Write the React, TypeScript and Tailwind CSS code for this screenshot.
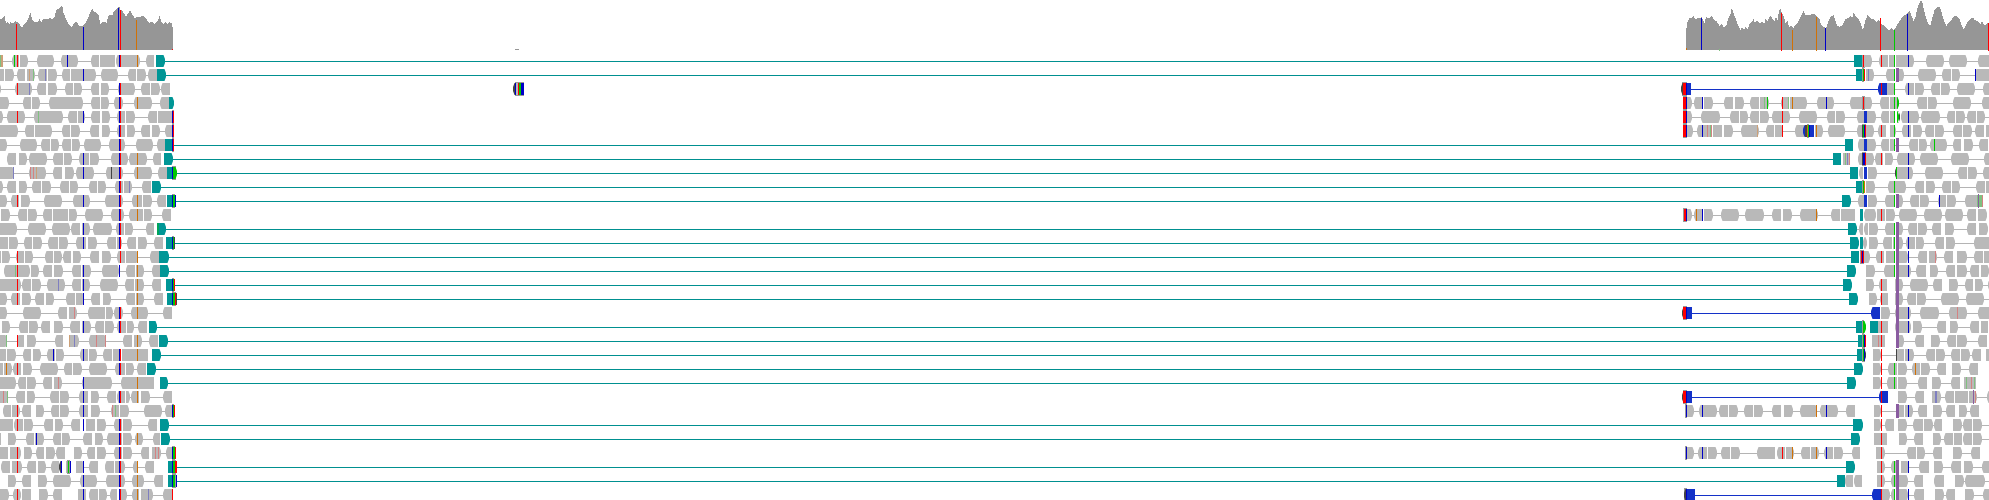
import React from "react";

/* Tracks are stored in locus units (three per pixel) relative to a panel origin.
   Reads:  12-40 plain, <12-40 reverse tip, 12-40> forward tip; t/b prefix = teal/blue.
   Bases:  r n g o p k (strong) and R N G O T (faint); h = soft-clip outline. */
const UNIT = 3;
const WIDTH = 1989;
const ROW = 14;
const LEFT = 0;
const MID = 5010;
const RIGHT = 5490;

const FILL: Record<string, string> = {
  "": "fill-[#b9b9b9]",
  t: "fill-[#009696]",
  b: "fill-[#1432c8]",
  r: "fill-[#ff0000]",
  n: "fill-[#0000c8]",
  g: "fill-[#00c800]",
  o: "fill-[#d17105]",
  p: "fill-[#8a5ca0]",
  k: "fill-[#444444]",
  h: "fill-[#999999]",
  R: "fill-[#d48282]",
  N: "fill-[#7f7fc0]",
  G: "fill-[#80c080]",
  O: "fill-[#cca078]",
  T: "fill-[#00a55a]",
};

const leftRows: string[] = [
  "0-10> <35-58 61-85> <110-163> <182-234> <272-297 300-345 <348-420> <437-462 t468-495> G0-3 O3-9 g43 r52 n202 n358 r361 o412",
  "0-12 15-42> <50-75 81-105> <115-140 143-170> <185-210 213-288> <302-355> <383-408 411-437> <443-471 t471-498> O88 G100 N136 n250",
  "0-3> <45-97> <112-138 144-170> <194-219 222-247> <272-297 303-328> <355-404> <423-450 453-480> <484-510 r52 N88 n358 r361",
  "0-26> <68-93 96-121> <148-200 200-250> <273-300 303-328> <343-370> <402-455> <481-507 t507-522> n358 r361 o412",
  "0-8> <20-74> <103-190> <205-230 233-256> <273-300 306-330> <350-375 378-406> <444-470 474-516 h515-522 r52 G115 n250 n358 r361 n517 r520",
  "0-53> <76-101 105-157> <185-210 213-241> <270-297 306-330> <352-375 381-406> <424-449 456-481> <495-516 h515-522 n358 r361 n517 r520",
  "0-20> <60-112> <124-150 153-178> <187-213 216-241> <252-304> <326-375> <408-460> <470-495 h515-522 t495-516 n358 r361 n517 r520",
  "<22-48 57-82> <88-140> <160-188 191-217> <236-267 270-296> <332-385> <387-440> <458-483 t492-519> n250 n358 r361 o412",
  "0-43> <87-138> <160-186 195-221> <228-282> <317-370> <402-457> <475-501 h516-528 t501-516 g520-531> N40 R91 R100 O109 n250 k334 n358 r361 o412 n517",
  "0-8> <22-48 57-82> <97-123 126-152> <180-207 210-235> <266-292 295-319> <345-369 372-395> <427-453 t456-483> n358 r361 N388",
  "0-20> <32-57 63-89> <133-185> <220-271> <316-370> <397-425 428-455> <472-497 h516-525 t501-516 r52 n250 n358 r361 o412 n517 g520-525 n525",
  "3-29> <55-81 84-110> <130-156 159-204 207-232> <255-308> <334-372> <387-428 431-457> <487-513 n358 r361 o412",
  "0-50> <85-137> <156-210> <212-240 246-270> <280-335> <347-372 375-400> <437-462 t472-497> T472-477 n250 n358 r361",
  "0-24 27-53> <71-96 99-125> <145-174 177-204> <228-258 265-292> <322-349 352-365> <382-408 414-440> <461-489 h516-522 t498-516 n250 n358 r361 n517 g520 k522",
  "0-3 6-31> <47-71 75-100> <134-159 162-187> <188-213 219-244> <270-297 306-332> <352-375 378-413> <450-477 t477-506> r52 r361 o412",
  "<12-63 64-89> 93-118> <128-156 162-188> <217-244 247-272> <306-358> <378-404 407-431> <455-480 t480-506> G46 r52 n250 n358 o412",
  "0-63> <66-93 96-122> <142-196> <217-243 246-271> <301-353> <376-402 405-431> <457-483 h516-522 t498-516 r52 N175 n250 o412 n517 g520 r522",
  "0-20> <33-60 66-92> <106-132 138-163> <199-225 228-253> <272-300 309-333> <379-405 408-432> <462-489 h516-528 t501-516 r52 n250 o412 n517 g520-526 r526 k529",
  "0-20> <70-124> <175-201 207-232> <264-316 317-340> <342-368> <392-443> <489-516 R223 n358 r361 o412",
  "6-31> <57-84 87-113> <123-150 162-188> <211-240 246-274> <286-312 315-341> <352-377 380-403> <415-440 t447-472> n250 n358 r361",
  "0-22> <50-71 81-107> <164-189 208-238> <266-318> <370-396 402-427> <447-474 t477-503> G19 r52 O208 N223 R289 R316 o412",
  "0-18 21-47> <68-93 99-124> <141-164 168-193> <239-264 267-292> <310-335 338-362 365-416 418-444 t456-483> n160 n250 n358 r361 o412",
  "0-9 12-35> <38-63 69-95> <121-175> <191-216 219-245> <266-320> <346-375 378-403> <412-438 t441-468> o19 r52 n358 r361",
  "0-47> <53-78 81-107> <130-156 162-187> <245-335> <364-390 391-462 t480-505> R175 n250 o412",
  "0-23> <48-75 81-105> <151-177 180-206> <238-264 273-298> <322-348 <352-375 378-390> <392-417 423-449> <490-516 R10 G22 n250 n358 r361 o412",
  "<8-33 36-61> <67-92 108-133> <152-177 180-208> <237-264 272-299> <332-358 360-388> <433-485> <496-516 h516-523 r52 R337 G346 n250 n517 g519 r522",
  "0-40 <42-69 72-98> <133-159 165-190> <214-240 258-285 291-317> <341-366 369-395> <445-471 t480-506> r52 n250 n358 r361",
  "0-3 24-49> <78-103 106-131> <160-183 186-211> <250-276 285-310> <320-366 369-395> <405-430> <458-480 t483-509> n109 n358 r361 o412",
  "0-24 30-62> 72-97> <107-132 138-164> <168-195 222-247> <262-285 291-317> <341-367 369-395> <423-448 456-483> <499-516 h516-526 r52 n358 r361 R467 R474 n517 g520-526 r526",
  "<4-30 36-66> <82-107 113-139> <152-176 k<177-184 n184 198-213 h202-210 g205 n211 228-252> <268-293 <315-341 344-375> <398-413> <435-462 h516-528 t504-516 r52 n250 n358 r361 o412 n517 g520-526 r526-531",
  "24-49> <67-93 114-140> <159-212> <239-291> <319-375> <396-432> <463-489 h516-528 t504-516 n250 n358 r361 o412 n517 g520-526 n528",
  "0-26> <40-62> 67-93 117-143> <159-186 234-259 <267-293 297-322> <330-352 <356-381> <397-416 423-459> <490-516 r52 n250 n358 r361 o412 N445 r517",
];

const midRows: Record<number, string> = {
  2: "h36-51 k<33-40 b48-63 r39-48 n49",
  3: "50-65> <72-98 101-128> <163-189 195-221> <240-267 270-297> <332-356 359-412> <440-491> h39-51 r39-48 n49 n97 G283 g292 r337 G355 o367 n469",
  4: "50-65> <94-149> <181-207 210-235> <240-267 270-297> <307-361> <387-440> <470-495 h39-51 r39-48 n49 r337",
  5: "50-68> <82-126> 130-156 162-188> <214-267> <287-312 315-340> <374-402 b<399-432 434-460> <473-526> h39-51 r39-48 n49 n97 R112 G121 R124 O262 r337 k406-411 h411-417 o411 g414 n417 o439",
  11: "50-67> <73-99 102-128> <153-207> <226-281> <307-333 339-366> <391-444> <483-509 513-555 h39-51 r42-48 n49 o79 n97 o439",
  18: "h38-51 k<36-42 b48-67 r40-48 n49",
  24: "h38-51 k<36-42 b48-67 r40-48 n49",
  25: "50-73> <88-140> <148-174 177-203> <223-249 252-278> <306-333 342-368> <391-440> <449-503> <528-555 h46-51 n49 n97 o439 n469",
  28: "50-73> <85-111 114-140> <153-180 183-209> <262-316 <320-345 348-372> <393-420 423-448> <463-489 492-518> <545-570 h46-51 n49 n97 r337 o367 o439 n469",
  31: "h43-51 k<41-48 b48-74 n49",
};

const rightRows: string[] = [
  "t72-96 h96-105 99-125> <148-174 177-196 198-251> <288-342> <358-411> <445-480 r100 r154 g193 n235",
  "t78-100 108-133> <168-196 206-221> <264-317> <336-363 366-391> <434-480 h97-103 g100 r103 N115 g193 p198-207 n436",
  "b<144-171 171-196> <226-251 255-281> <304-330 333-359> <381-434> <458-480 r154 g193 n235",
  "<60-125> <150-176 179-207> <262-290 294-320> <369-423> <456-480 h97-104 r100 g193 g201-208>",
  "0-15 18-44> <82-102 b102-111 112-139> <152-178 180-196 <213-266> <274-329> <350-375 378-404> <411-438 441-466> <478-480 g193 g201-208> k208-211> n235",
  "<80-132> <143-168 180-197> <217-244 250-275> <286-312 315-341> <370-396 399-425> <435-462 468-480 h96-108 k97 g100 n103 r106 r154 g193 n235",
  "t45-69 <85-102 b102-111 112-137> <152-177 180-196> <238-264 267-292> <299-352> <369-393 402-428> <447-474 g193 p198-207 g313",
  "t9-33 39-60 <83-100 106-133> <134-159 165-190> <202-254> <270-323> <363-416> <462-480 G46 N52 R58 h96-108 k97 n99-105 r106 r154 n235",
  "t60-84 <86-100 b102-111 113-140> <195-249> <285-339> <384-411 414-440> <460-480 k<194-199 g199 n235",
  "t78-100 108-134> <175-227> <255-282 288-314> <337-363 366-391> <437-465 467-480 h97-103 g100 o103 g193",
  "t36-63> <85-101 b102-111 113-142> <165-196 207-218> <240-267 270-296> <325-348 351-377> <405-458> g193 p198-207 n328 G442 p445 G448-456 R457",
  "t90-99 <101-138> 140-165 168-194> <207-260> <282-336> <346-400> <411-438 444-470> r154",
  "t54-80> <88-99 <101-114 117-143> <165-196 207-218> <234-261 264-290> <306-333 345-371> <412-438 447-473> g193",
  "t60-86> t90-99 <100-112> 117-143> <160-187 189-196 207-218> <228-254 258-283> <316-342 348-374> <433-480 g193 n235",
  "t63-87 90-119> <138-161 168-196 207-235> <264-290 297-322> <342-368 381-410> <433-459 462-480 h90-103 r93 n97 r100 r154 g193 n235 R316",
  "t51-77> 108-134> <162-196 198-243> <259-288 300-325> <348-374 382-411> <421-447 453-477> g193 n235",
  "t39-65> 108-133> <147-171 195-220> <240-294> <309-336 357-383> <404-429 435-460> <474-480 r154",
  "t57-83> 117-142> <149-174 195-220> <232-258 261-287> <333-386> <408-461> <478-480 r154",
  "b<123-150 153-179> <195-244> <271-326> <358-412> <444-480 n235 R382",
  "t78-99 h97-103 g100-108> t120-144 144-174 <195-243> 249-275> <321-347 360-384> <420-447 453-475 r154 n235",
  "t84-98 126-165 198-223> <255-282 303-329> <352-377 381-411> <445-471 h96-105 g99 n103 r106 R145 r154",
  "t81-98 129-154> <198-222 225-252> <289-315 318-344> <364-390 393-419> <427-453 468-480 h97-105 g99 n103 k105-109> r154 k199 n235",
  "t72-99> 129-154> <175-201 204-230> <245-270 273-299> <321-348 366-392> <417-444 r154 g193 o256",
  "t51-77> 129-154> <170-201 204-231> <264-291 306-332> <362-389 402-438 r154 g193 G409 R424 G433",
  "b<148-174 204-230> <255-282 306-332> <346-372 375-414 417-441> <471-480 r154 N315-321 p430 R436",
  "132-154> <198-222 225-250> <264-290 309-335> <348-375 387-412> <420-447 r154 p198-207 n235",
  "t69-98> 132-154> <165-192 204-232> <249-279 282-308> <311-336 369-396> <400-426 429-455> <477-480 r154",
  "t63-90> 132-171 207-232> <252-279 309-334> <343-369 372-396 <399-426 429-455> <477-480 r154",
  "138-164> <232-258 261-286> <309-336 369-395> <423-450 r154",
  "t48-75> 141-165> <182-207 213-238> <268-297 312-339> <363-393 402-430> <457-480 r154 g193 n235",
  "t21-45 <45-70 <71-96 141-165> <182-207 207-233> <252-279 <313-342 375-401> <405-464> <478-480 r154 g193",
  "b<126-154 154-181> <184-196 207-233> <253-282 315-341> <348-375 405-431> <459-480 r154 g193 n235",
];

/* Long-range mates: row, left x, right x (px). */
const tealMates: [number, number, number][] = [
  [0, 164, 1854], [1, 165, 1856], [6, 174, 1845], [7, 172, 1833], [8, 176, 1850],
  [9, 160, 1856], [10, 176, 1842], [12, 165, 1848], [13, 175, 1850], [14, 168, 1851],
  [15, 168, 1847], [16, 175, 1843], [17, 177, 1849], [19, 156, 1856], [20, 167, 1858],
  [21, 160, 1857], [22, 155, 1854], [23, 167, 1847], [26, 168, 1853], [27, 169, 1851],
  [29, 177, 1846], [30, 177, 1837],
];
const blueMates: [number, number, number][] = [
  [2, 1691, 1879], [18, 1692, 1872], [24, 1692, 1880], [31, 1694, 1873],
];

/* Insertion runs spanning several rows: top, height. */
const insertions: [number, number][] = [[167, 126], [405, 40]];

interface Item {
  kind: string;
  x0: number;
  x1: number;
  rev: boolean;
  fwd: boolean;
  read: boolean;
}

function parse(text: string, origin: number): Item[] {
  const out: Item[] = [];
  for (const token of text.split(" ")) {
    const m = /^([a-zA-Z]?)(<?)(\d+)(?:-(\d+))?(>?)$/.exec(token);
    if (!m) continue;
    const start = origin + Number(m[3]);
    const x0 = m[4] ? Math.round(start / UNIT) : Math.floor(start / UNIT);
    const x1 = m[4] ? Math.max(x0 + 1, Math.round((origin + Number(m[4])) / UNIT)) : x0 + 1;
    out.push({
      kind: m[1], x0, x1,
      rev: m[2] === "<", fwd: m[5] === ">",
      read: m[1] === "" || m[1] === "t" || m[1] === "b",
    });
  }
  return out;
}

function Shape({ item, y }: { item: Item; y: number }) {
  const { kind, x0, x1, rev, fwd } = item;
  if (kind === "h" || kind === "p") {
    return <rect x={x0} y={y - 1} width={x1 - x0} height={14} className={FILL[kind]} />;
  }
  if (!rev && !fwd) return <rect x={x0} y={y} width={x1 - x0} height={12} className={FILL[kind]} />;
  /* Blunt tip: the corners are cut, the middle third stays flat. */
  const a = rev ? x0 + 1.5 : x0;
  const b = fwd ? x1 - 1.5 : x1;
  const d = `M${a} ${y}H${b}L${x1} ${y + 4}V${y + 8}L${b} ${y + 12}H${a}L${x0} ${y + 8}V${y + 4}Z`;
  return <path d={d} className={FILL[kind]} />;
}

function Reads({ items, y }: { items: Item[]; y: number }) {
  const reads = items.filter((i) => i.read);
  return (
    <g>
      {reads.slice(1).map((next, i) => {
        const prev = reads[i];
        return prev.fwd && next.rev && next.x0 >= prev.x1 - 1 ? (
          <rect key={i} x={prev.x1 - 1} y={y + 6} width={next.x0 - prev.x1 + 2} height={1} className="fill-[#b4b4b4]" />
        ) : null;
      })}
      {items.map((item, i) => (
        <Shape key={i} item={item} y={y} />
      ))}
    </g>
  );
}

function Alignments() {
  return (
    <svg viewBox={`0 0 ${WIDTH} 445`} className="block w-full" role="img" aria-label="Read alignments">
      {tealMates.map(([row, a, b]) => (
        <rect key={row} x={a} y={row * ROW + 6} width={b - a} height={1} className="fill-[#009090]" />
      ))}
      {blueMates.map(([row, a, b]) => (
        <rect key={row} x={a} y={row * ROW + 6} width={b - a} height={1} className="fill-[#1432c8]" />
      ))}
      {leftRows.map((text, row) => (
        <Reads key={row} items={parse(text, LEFT)} y={row * ROW} />
      ))}
      {rightRows.map((text, row) => (
        <Reads key={row} items={[...parse(midRows[row] ?? "", MID), ...parse(text, RIGHT)]} y={row * ROW} />
      ))}
      {insertions.map(([y, h]) => (
        <rect key={y} x={1896} y={y} width={3} height={h} className="fill-[#8a5ca0]" />
      ))}
      <Reads items={parse("h75-102 k<70-76 75-84 n75 r84 g87-93 n93-102", 1470)} y={28} />
    </svg>
  );
}

const leftDepth =
  "0,57 7,55 13,48 16,62 19,68 22,66 27,72 31,66 37,70 46,64 52,66 58,72 66,84 70,74 78,68 84,58 90,37 94,50 97,60 103,66 112,65 118,58 124,66 128,56 136,56 145,57 151,53 155,60 163,50 168,30 176,25 183,18 188,22 190,40 197,55 202,65 208,76 215,82 222,70 230,64 236,76 243,80 250,74 256,68 262,58 268,42 276,26 280,34 290,38 296,46 300,72 305,68 312,66 320,68 323,50 330,44 337,46 340,36 346,30 352,24 358,20 361,30 366,30 372,42 378,50 384,40 390,30 396,42 404,56 412,50 420,50 430,48 436,54 442,62 448,68 455,64 462,72 468,66 474,60 478,48 484,66 490,73 496,66 502,72 508,66 514,70 518,84";
const midDepth =
  "48,90 52,66 58,54 65,54 70,49 76,56 85,55 94,52 97,58 103,70 108,50 113,56 120,52 125,48 130,56 136,62 141,66 148,78 155,70 160,82 168,78 173,58 180,45 184,28 188,30 191,45 197,54 201,72 207,80 211,90 216,82 222,88 226,80 232,88 238,72 245,66 250,58 254,70 260,60 268,70 276,64 282,72 286,56 292,62 300,46 306,54 312,64 318,50 322,60 327,32 331,26 335,40 341,48 346,68 352,64 357,80 364,78 370,84 376,74 383,68 388,56 394,44 400,34 406,46 414,44 420,44 428,40 434,44 442,52 447,54 452,74 458,80 468,84 474,66 480,52";
const rightDepth =
  "480,52 490,45 495,62 502,78 510,80 518,74 526,58 534,54 540,48 546,54 551,36 556,48 564,56 572,70 578,90 586,60 592,46 600,54 610,58 618,66 626,58 632,70 640,76 648,82 656,92 663,84 670,90 677,82 686,66 694,54 702,46 710,42 717,32 723,44 730,62 736,50 742,24 748,8 753,0 757,8 762,34 768,54 774,72 780,78 786,54 794,28 800,22 807,20 812,30 817,48 823,66 828,78 834,70 842,62 850,50 860,48 868,56 874,74 880,88 886,78 892,66 900,58 908,52 914,60 922,64 930,72 936,64 944,78 952,70 957,70";

function depthPath(text: string, origin: number): string {
  const pts = text.split(" ").map((p) => p.split(",").map(Number));
  const first = Math.round((pts[0][0] + origin) / UNIT);
  const last = Math.round((pts[pts.length - 1][0] + origin) / UNIT);
  let d = `M${first} 50`;
  let k = 0;
  for (let x = first; x < last; x++) {
    const u = x * UNIT - origin + 1;
    while (k < pts.length - 2 && pts[k + 1][0] < u) k++;
    const [ax, ay] = pts[k];
    const [bx, by] = pts[k + 1];
    const t = Math.min(1, Math.max(0, (u - ax) / (bx - ax)));
    const y = Math.max(0, Math.round((ay + (by - ay) * t) / UNIT));
    d += `V${y}H${x + 1}`;
  }
  return `${d}V50Z`;
}

/* Variant bars: colour, x, top, bottom (px). */
const variants: [string, number, number, number][] = [
  ["r", 16, 24, 49], ["n", 83, 27, 49], ["n", 118, 8, 49], ["r", 120, 10, 49], ["o", 136, 20, 49], ["r", 172, 49, 49],
  ["o", 1686, 48, 49], ["n", 1701, 18, 49], ["G", 1719, 49, 50], ["r", 1781, 13, 50], ["o", 1792, 30, 50],
  ["o", 1816, 17, 50], ["n", 1825, 28, 50], ["r", 1880, 18, 50], ["g", 1894, 30, 50], ["n", 1907, 14, 50], ["r", 1988, 23, 50],
];

function Coverage() {
  return (
    <svg viewBox={`0 0 ${WIDTH} 55`} className="block w-full" role="img" aria-label="Coverage">
      <path d={depthPath(leftDepth, LEFT)} className="fill-[#969696]" />
      <path d={depthPath(midDepth, MID)} className="fill-[#969696]" />
      <path d={depthPath(rightDepth, MID)} className="fill-[#969696]" />
      <rect x={515} y={49} width={4} height={1} className="fill-[#969696]" />
      {variants.map(([c, x, top, bottom]) => (
        <rect key={x} x={x} y={top} width={1} height={bottom - top + 1} className={FILL[c]} />
      ))}
      <rect x={118} y={8} width={1} height={42} className={FILL.n} />
    </svg>
  );
}

export default function App() {
  return (
    <main className="flex w-full flex-col overflow-hidden bg-white">
      <Coverage />
      <Alignments />
    </main>
  );
}
